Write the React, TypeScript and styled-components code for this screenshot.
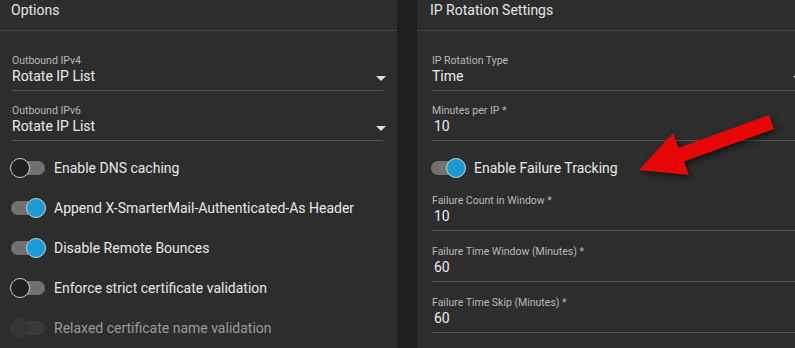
import React from 'react';
import styled, { createGlobalStyle } from 'styled-components';

const GlobalStyle = createGlobalStyle`
  html, body {
    margin: 0;
    padding: 0;
    background: #1f1f1f;
    overflow: hidden;
  }
  body {
    font-family: Roboto, 'Liberation Sans', sans-serif;
  }
`;

const Page = styled.div`
  position: relative;
  display: flex;
  gap: 20px;
  width: 814px;
  height: 348px;
`;

const Panel = styled.section`
  width: 397px;
  flex-shrink: 0;
  height: 100%;
  background: #2d2d2d;
`;

const PanelHeader = styled.div<{ indent: number }>`
  height: 30px;
  padding-left: ${p => p.indent}px;
  border-bottom: 1px solid #474747;
  color: #e6e6e6;
  font-size: 14px;
  line-height: 20px;
`;

const PanelBody = styled.div<{ indent: number }>`
  padding: 10px 14px 0 ${p => p.indent}px;
`;

const Field = styled.div<{ space: number }>`
  margin-top: ${p => p.space}px;
  padding-bottom: 5px;
  border-bottom: 1px solid #555;
`;

const FieldLabel = styled.div`
  color: #b9b9b9;
  font-size: 10.5px;
  line-height: 12px;
`;

const ValueRow = styled.div`
  display: flex;
  align-items: center;
  justify-content: space-between;
  height: 18px;
`;

const FieldValue = styled.div<{ inset?: boolean }>`
  padding-left: ${p => (p.inset ? 2 : 0)}px;
  color: #ececec;
  font-size: 14px;
  line-height: 18px;
`;

const Caret = styled.span`
  width: 0;
  height: 0;
  margin: 4px -3px 0 0;
  border-left: 5px solid transparent;
  border-right: 5px solid transparent;
  border-top: 5px solid #dcdcdc;
`;

const ToggleList = styled.div`
  margin-top: 7px;
  margin-left: -2px;
`;

const ToggleRow = styled.div`
  display: flex;
  align-items: center;
  gap: 8px;
  height: 40px;
`;

const Switch = styled.span<{ on: boolean; disabled?: boolean }>`
  position: relative;
  width: 36px;
  height: 20px;
  flex-shrink: 0;

  &::before {
    content: '';
    position: absolute;
    left: 1px;
    top: 3px;
    width: 34px;
    height: 14px;
    border-radius: 7px;
    background: ${p => (p.disabled ? '#3a3a3a' : '#717171')};
  }

  &::after {
    content: '';
    position: absolute;
    top: 0;
    left: ${p => (p.on ? 16 : 0)}px;
    width: 20px;
    height: 20px;
    box-sizing: border-box;
    border-radius: 50%;
    background: ${p => (p.on ? '#1b9ad6' : p.disabled ? '#353535' : '#1f1f1f')};
    border: 1.5px solid ${p => (p.disabled ? '#3a3a3a' : '#cfcfcf')};
  }
`;

const ToggleText = styled.span<{ disabled?: boolean }>`
  color: ${p => (p.disabled ? '#9c9c9c' : '#e8e8e8')};
  font-size: 14px;
  line-height: 18px;
`;

const ArrowLayer = styled.svg`
  position: absolute;
  left: 0;
  top: 0;
  width: 795px;
  height: 348px;
  pointer-events: none;
  filter: drop-shadow(2px 3px 3px rgba(0, 0, 0, 0.55));
`;

type FieldProps = { label: string; value: string; select?: boolean; inset?: boolean; space?: number };

const FormField = ({ label, value, select, inset, space = 14 }: FieldProps) => (
  <Field space={space}>
    <FieldLabel>{label}</FieldLabel>
    <ValueRow>
      <FieldValue inset={inset}>{value}</FieldValue>
      {select && <Caret />}
    </ValueRow>
  </Field>
);

const Toggle = ({ label, on, disabled }: { label: string; on: boolean; disabled?: boolean }) => (
  <ToggleRow>
    <Switch on={on} disabled={disabled} />
    <ToggleText disabled={disabled}>{label}</ToggleText>
  </ToggleRow>
);

const options = [
  { label: 'Enable DNS caching', on: false },
  { label: 'Append X-SmarterMail-Authenticated-As Header', on: true },
  { label: 'Disable Remote Bounces', on: true },
  { label: 'Enforce strict certificate validation', on: false },
  { label: 'Relaxed certificate name validation', on: false, disabled: true },
];

export default function App() {
  return (
    <Page>
      <GlobalStyle />
      <Panel>
        <PanelHeader indent={11}>Options</PanelHeader>
        <PanelBody indent={12}>
          <FormField label="Outbound IPv4" value="Rotate IP List" select />
          <FormField label="Outbound IPv6" value="Rotate IP List" select />
          <ToggleList>
            {options.map(o => (
              <Toggle key={o.label} label={o.label} on={o.on} disabled={o.disabled} />
            ))}
          </ToggleList>
        </PanelBody>
      </Panel>

      <Panel>
        <PanelHeader indent={13}>IP Rotation Settings</PanelHeader>
        <PanelBody indent={15}>
          <FormField label="IP Rotation Type" value="Time" select />
          <FormField label="Minutes per IP *" value="10" inset />
          <ToggleList>
            <Toggle label="Enable Failure Tracking" on />
          </ToggleList>
          <FormField label="Failure Count in Window *" value="10" inset space={7} />
          <FormField label="Failure Time Window (Minutes) *" value="60" inset space={15} />
          <FormField label="Failure Time Skip (Minutes) *" value="60" inset space={15} />
        </PanelBody>
      </Panel>

      <ArrowLayer viewBox="0 0 795 348">
        <polygon
          points="639,170 673,133 678.6,147.7 769,115 774,129 683.9,161.6 689,175"
          fill="#e60808"
        />
      </ArrowLayer>
    </Page>
  );
}
